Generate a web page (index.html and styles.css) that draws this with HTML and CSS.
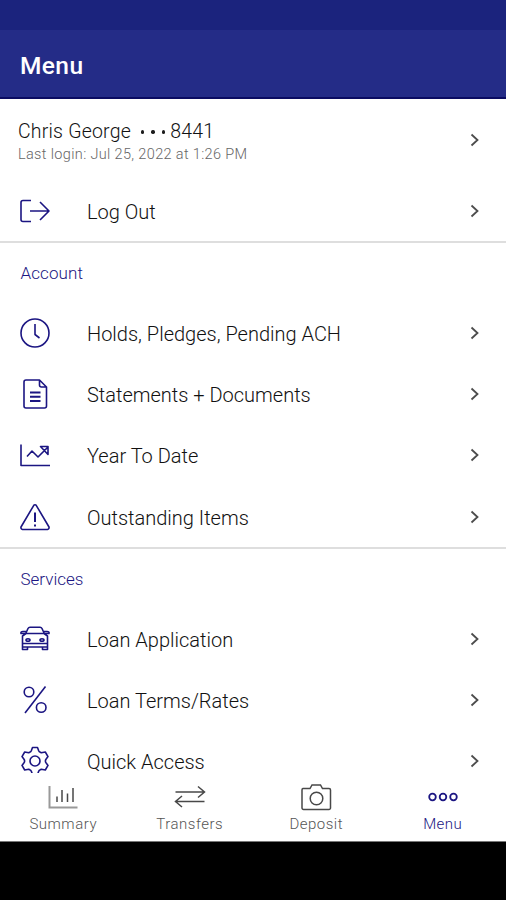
FILE: index.html
```html
<!DOCTYPE html>
<html lang="en">
<head>
  <meta charset="UTF-8">
  <title>Menu</title>
  <link rel="stylesheet" href="styles.css">
</head>
<body>

  <div class="status-bar"></div>
  <header>
    <h1>Menu</h1>
  </header>

  <main>
    <section class="first">
      <div class="profile">
        <div>
          <div class="name"><span>Chris George</span><span class="dots"><i></i><i></i><i></i></span><span>8441</span></div>
          <div class="login">Last login: Jul 25, 2022 at 1:26 PM</div>
        </div>
        <svg class="chevron" viewBox="0 0 10 14"><path d="M1.5 1.5L7.5 7L1.5 12.5"/></svg>
      </div>
      <div class="row logout">
        <svg class="icon" viewBox="0 0 32 32"><path d="M12 5.5H4a2 2 0 0 0-2 2v17a2 2 0 0 0 2 2h8M11 16h19M21 7l9 9-9 9"/></svg>
        <span class="label">Log Out</span>
        <svg class="chevron" viewBox="0 0 10 14"><path d="M1.5 1.5L7.5 7L1.5 12.5"/></svg>
      </div>
    </section>

    <section>
      <h2>Account</h2>
      <div class="row">
        <svg class="icon" viewBox="0 0 32 32"><circle cx="16" cy="16" r="14"/><path d="M16 7v10.5l4.5 3.5"/></svg>
        <span class="label">Holds, Pledges, Pending ACH</span>
        <svg class="chevron" viewBox="0 0 10 14"><path d="M1.5 1.5L7.5 7L1.5 12.5"/></svg>
      </div>
      <div class="row">
        <svg class="icon" viewBox="0 0 32 32"><path d="M20.5 2H7a2 2 0 0 0-2 2v24a2 2 0 0 0 2 2h18.5a2 2 0 0 0 2-2V9zM20.5 2v5a2 2 0 0 0 2 2h5"/><path class="bold" d="M11 14.5h10.5M11 18.7h10.5M11 23h10.5"/></svg>
        <span class="label">Statements + Documents</span>
        <svg class="chevron" viewBox="0 0 10 14"><path d="M1.5 1.5L7.5 7L1.5 12.5"/></svg>
      </div>
      <div class="row">
        <svg class="icon" viewBox="0 0 32 32"><path d="M2 5.5v21h29M8 17.5l5-5.5 6 6L28.500 8.500M21.500 7.500h7.500v8z"/></svg>
        <span class="label">Year To Date</span>
        <svg class="chevron" viewBox="0 0 10 14"><path d="M1.5 1.5L7.5 7L1.5 12.5"/></svg>
      </div>
      <div class="row">
        <svg class="icon" viewBox="0 0 32 32"><path d="M14.8 4.3L2 26a2 2 0 0 0 1.5 2.5h25A2 2 0 0 0 30 26L17.200 4.300a1.500 1.500 0 0 0-2.400 0z"/><path class="bold" d="M16 11.5v9.500M16 23.500v2"/></svg>
        <span class="label">Outstanding Items</span>
        <svg class="chevron" viewBox="0 0 10 14"><path d="M1.5 1.5L7.5 7L1.5 12.5"/></svg>
      </div>
    </section>

    <section class="services">
      <h2>Services</h2>
      <div class="row">
        <svg class="icon" viewBox="0 0 32 32"><path d="M6.500 11L9 5.500q.6-1.200 2-1.200h10q1.400 0 2 1.200L25.500 11M7 10.500h18l3.500 2.500v11h-25V13zM6.500 10.500H2q-.6-2 2-2h3M25.500 10.500H30q.6-2-2-2h-3M4 20.500h24M3.500 24v2.500h5V24M23.500 24v2.500h5V24"/><ellipse cx="9" cy="17" rx="2" ry="1.200"/><ellipse cx="23" cy="17" rx="2" ry="1.200"/></svg>
        <span class="label">Loan Application</span>
        <svg class="chevron" viewBox="0 0 10 14"><path d="M1.5 1.5L7.5 7L1.5 12.5"/></svg>
      </div>
      <div class="row">
        <svg class="icon" viewBox="0 0 32 32"><path d="M26.500 2.500L6 29"/><circle cx="10" cy="8" r="4.800"/><circle cx="22.200" cy="23.500" r="4.800"/></svg>
        <span class="label">Loan Terms/Rates</span>
        <svg class="chevron" viewBox="0 0 10 14"><path d="M1.5 1.5L7.5 7L1.5 12.5"/></svg>
      </div>
      <div class="row">
        <svg class="icon" viewBox="0 0 32 32"><path d="M13.500 2.500h5l1.200 3.300q.4 1 1.600 1.400l1 .5 4-.7 2.700 4.600-2 2.600q-.6.900-.6 1.800t.6 1.800l2 2.600-2.700 4.600-4-.7-1 .5q-1.200.4-1.600 1.400l-1.200 3.300h-5l-1.200-3.300q-.4-1-1.600-1.400l-1-.5-4 .7L3 20.400l2-2.600q.6-.9.600-1.800T5 14.200l-2-2.600L5.700 7l4 .7 1-.5q1.200-.4 1.600-1.400z"/><circle cx="16" cy="16" r="5"/></svg>
        <span class="label">Quick Access</span>
        <svg class="chevron" viewBox="0 0 10 14"><path d="M1.5 1.5L7.5 7L1.5 12.5"/></svg>
      </div>
    </section>
  </main>

  <nav>
    <div class="tab">
      <svg viewBox="0 0 32 28"><path class="axis" d="M2.500 3v21.500h28"/><path d="M10 13.500v5.500M15 7v12M20.500 10.500v8.500M26 5v14"/></svg>
      <span>Summary</span>
    </div>
    <div class="tab">
      <svg viewBox="0 0 32 28"><path d="M1.500 9h29M24 3.500L30.500 9 24 14.500M30.500 18.500h-29M8 13L1.500 18.500 8 24"/></svg>
      <span>Transfers</span>
    </div>
    <div class="tab">
      <svg viewBox="0 0 32 28"><path d="M3 5.500h7l2-3.500h8.500l2 3.500H29a1.500 1.500 0 0 1 1.500 1.500V25a1.500 1.500 0 0 1-1.500 1.500H3.500A1.500 1.500 0 0 1 2 25V7A1.500 1.500 0 0 1 3 5.500z"/><circle cx="16.500" cy="15.500" r="6.300"/></svg>
      <span>Deposit</span>
    </div>
    <div class="tab active">
      <svg viewBox="0 0 32 28"><circle cx="5.500" cy="14" r="3.300"/><circle cx="16" cy="14" r="3.300"/><circle cx="26.500" cy="14" r="3.300"/></svg>
      <span>Menu</span>
    </div>
  </nav>
  <footer></footer>

</body>
</html>
```
FILE: styles.css
```css
* {
  box-sizing: border-box;
}

body {
  margin: 0;
  height: 900px;
  display: flex;
  flex-direction: column;
  overflow: hidden;
  font-family: Roboto, "Liberation Sans", sans-serif;
  background: #fff;
  color: #111;
}

.status-bar {
  height: 30px;
  background: #1b237d;
}

header {
  height: 69px;
  padding: 0 20px;
  display: flex;
  align-items: center;
  background: #242c87;
  border-bottom: 2px solid #0b0c62;
}

h1 {
  margin: 4px 0 0;
  font-size: 24.5px;
  font-weight: 500;
  letter-spacing: 0.4px;
  color: #fff;
}

main {
  height: 674px;
  overflow: hidden;
}

section {
  height: 306px;
  border-bottom: 2px solid #dedede;
}

section.first {
  height: 144px;
}

h2 {
  margin: 0;
  height: 59px;
  padding-left: 20.5px;
  line-height: 60px;
  font-size: 17px;
  font-weight: 300;
  letter-spacing: 0.1px;
  color: #1b1582;
}

.services h2 {
  letter-spacing: 0;
}

.profile {
  height: 82px;
  padding: 6px 26px 0 18px;
  display: flex;
  align-items: center;
  justify-content: space-between;
}

.profile .chevron {
  margin-bottom: 6px;
}

.name {
  display: flex;
  align-items: center;
  font-size: 19.5px;
  font-weight: 300;
  line-height: 24px;
  letter-spacing: 0.2px;
}

.dots {
  display: flex;
  gap: 7px;
  margin: 0 5px 0 10px;
}

.dots i {
  width: 3.4px;
  height: 3.4px;
  border-radius: 50%;
  background: #1c1c1c;
}

.login {
  font-size: 14.5px;
  font-weight: 300;
  line-height: 22px;
  letter-spacing: 0.35px;
  color: #666;
}

.row {
  height: 61.3px;
  padding: 0 26px 0 19px;
  display: flex;
  align-items: center;
}

.row.logout {
  height: 60px;
}

.icon {
  width: 32px;
  height: 32px;
  margin-right: 36px;
  fill: none;
  stroke: #1b1582;
  stroke-width: 1.6;
  stroke-linejoin: round;
}

.icon .bold {
  stroke-width: 2;
}

.label {
  flex: 1;
  padding-top: 2px;
  font-size: 20px;
  font-weight: 300;
}

.chevron {
  width: 10px;
  height: 14px;
  fill: none;
  stroke: #4c4c4c;
  stroke-width: 1.8;
}

nav {
  height: 69px;
  display: grid;
  grid-template-columns: repeat(4, 1fr);
  border-bottom: 1px solid #777;
}

.tab {
  padding-top: 10px;
  display: flex;
  flex-direction: column;
  align-items: center;
  font-size: 15px;
  font-weight: 300;
  letter-spacing: 0.5px;
  color: #555;
}

.tab svg {
  width: 32px;
  height: 28px;
  margin-bottom: 4px;
  fill: none;
  stroke: #484848;
  stroke-width: 1.5;
}

.tab .axis {
  stroke: #999;
  stroke-width: 2;
}

.tab.active {
  color: #1b1582;
}

.tab.active svg {
  stroke: #1b1582;
  stroke-width: 1.8;
}

footer {
  flex: 1;
  background: #000;
}
```
